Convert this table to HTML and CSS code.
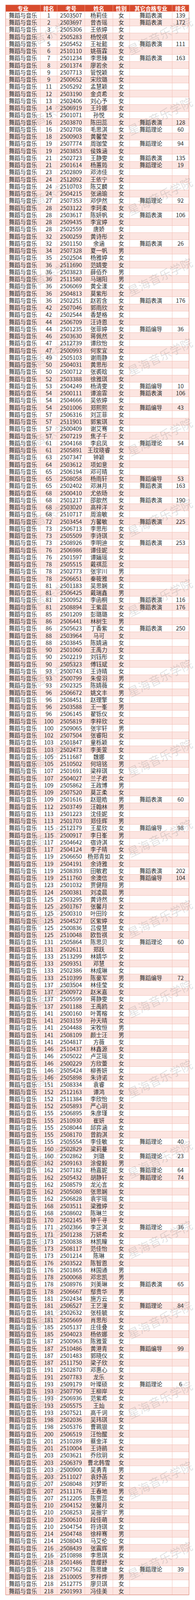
FILE: index.html
```html
<!DOCTYPE html>
<html lang="zh-CN">
<head>
<meta charset="utf-8">
<title>舞蹈与音乐 排名</title>
<link rel="stylesheet" href="styles.css">
</head>
<body>
<div class="page">
<div class="sheet">
<div class="r hd"><span>专业</span><span>排名</span><span>考号</span><span>姓名</span><span>性别</span><span>其它合格专业</span><span>排名</span></div>
<div class="r"><span>舞蹈与音乐</span><span>1</span><span>2503507</span><span>杨莉佳</span><span>女</span><span>舞蹈表演</span><span>139</span></div>
<div class="r"><span>舞蹈与音乐</span><span>2</span><span>2503697</span><span>曾杏瑶</span><span>女</span><span>舞蹈表演</span><span>172</span></div>
<div class="r"><span>舞蹈与音乐</span><span>3</span><span>2505306</span><span>王依婷</span><span>女</span><span></span><span></span></div>
<div class="r"><span>舞蹈与音乐</span><span>4</span><span>2505283</span><span>杨悦祺</span><span>女</span><span></span><span></span></div>
<div class="r"><span>舞蹈与音乐</span><span>5</span><span>2505452</span><span>王祉懿</span><span>女</span><span>舞蹈表演</span><span>111</span></div>
<div class="r"><span>舞蹈与音乐</span><span>6</span><span>2510110</span><span>姚蓓霖</span><span>女</span><span></span><span></span></div>
<div class="r"><span>舞蹈与音乐</span><span>7</span><span>2501234</span><span>李思臻</span><span>女</span><span>舞蹈表演</span><span>163</span></div>
<div class="r"><span>舞蹈与音乐</span><span>8</span><span>2501374</span><span>廖若余</span><span>女</span><span></span><span></span></div>
<div class="r"><span>舞蹈与音乐</span><span>9</span><span>2507713</span><span>管悦颖</span><span>女</span><span></span><span></span></div>
<div class="r"><span>舞蹈与音乐</span><span>9</span><span>2500652</span><span>宋欣璐</span><span>女</span><span></span><span></span></div>
<div class="r"><span>舞蹈与音乐</span><span>11</span><span>2505292</span><span>孟慧颖</span><span>女</span><span></span><span></span></div>
<div class="r"><span>舞蹈与音乐</span><span>12</span><span>2503190</span><span>金贞希</span><span>女</span><span></span><span></span></div>
<div class="r"><span>舞蹈与音乐</span><span>13</span><span>2502406</span><span>刘心予</span><span>女</span><span></span><span></span></div>
<div class="r"><span>舞蹈与音乐</span><span>14</span><span>2506919</span><span>王玲娜</span><span>女</span><span></span><span></span></div>
<div class="r"><span>舞蹈与音乐</span><span>15</span><span>2501071</span><span>孙悦</span><span>女</span><span></span><span></span></div>
<div class="r"><span>舞蹈与音乐</span><span>16</span><span>2503870</span><span>陈田蕊</span><span>女</span><span>舞蹈表演</span><span>128</span></div>
<div class="r"><span>舞蹈与音乐</span><span>16</span><span>2502708</span><span>毛思淇</span><span>女</span><span>舞蹈理论</span><span>60</span></div>
<div class="r"><span>舞蹈与音乐</span><span>18</span><span>2500903</span><span>黄馨莹</span><span>女</span><span></span><span></span></div>
<div class="r"><span>舞蹈与音乐</span><span>19</span><span>2507774</span><span>周珈莹</span><span>女</span><span>舞蹈理论</span><span>94</span></div>
<div class="r"><span>舞蹈与音乐</span><span>19</span><span>2503853</span><span>侯姝涵</span><span>女</span><span></span><span></span></div>
<div class="r"><span>舞蹈与音乐</span><span>21</span><span>2502723</span><span>王静雯</span><span>女</span><span>舞蹈表演</span><span>135</span></div>
<div class="r"><span>舞蹈与音乐</span><span>21</span><span>2501614</span><span>杨蕙筠</span><span>女</span><span>舞蹈理论</span><span>19</span></div>
<div class="r"><span>舞蹈与音乐</span><span>23</span><span>2502809</span><span>邓沛佳</span><span>女</span><span></span><span></span></div>
<div class="r"><span>舞蹈与音乐</span><span>24</span><span>2512092</span><span>王依宁</span><span>女</span><span></span><span></span></div>
<div class="r"><span>舞蹈与音乐</span><span>24</span><span>2510703</span><span>陈艾麟</span><span>女</span><span></span><span></span></div>
<div class="r"><span>舞蹈与音乐</span><span>24</span><span>2504215</span><span>张涵瑜</span><span>女</span><span></span><span></span></div>
<div class="r"><span>舞蹈与音乐</span><span>27</span><span>2507353</span><span>邓伊然</span><span>女</span><span>舞蹈理论</span><span>92</span></div>
<div class="r"><span>舞蹈与音乐</span><span>28</span><span>2503122</span><span>李珂柔</span><span>女</span><span></span><span></span></div>
<div class="r"><span>舞蹈与音乐</span><span>28</span><span>2503617</span><span>陈妍帆</span><span>女</span><span>舞蹈表演</span><span>106</span></div>
<div class="r"><span>舞蹈与音乐</span><span>28</span><span>2509435</span><span>李宜婷</span><span>女</span><span></span><span></span></div>
<div class="r"><span>舞蹈与音乐</span><span>28</span><span>2502559</span><span>唐娇</span><span>女</span><span></span><span></span></div>
<div class="r"><span>舞蹈与音乐</span><span>32</span><span>2500259</span><span>黄诗彤</span><span>女</span><span></span><span></span></div>
<div class="r"><span>舞蹈与音乐</span><span>32</span><span>2501150</span><span>余涵</span><span>女</span><span>舞蹈表演</span><span>26</span></div>
<div class="r"><span>舞蹈与音乐</span><span>34</span><span>2507328</span><span>夏一帆</span><span>男</span><span></span><span></span></div>
<div class="r"><span>舞蹈与音乐</span><span>35</span><span>2502504</span><span>杨雅婷</span><span>女</span><span></span><span></span></div>
<div class="r"><span>舞蹈与音乐</span><span>36</span><span>2511690</span><span>范婧雯</span><span>女</span><span></span><span></span></div>
<div class="r"><span>舞蹈与音乐</span><span>36</span><span>2503823</span><span>薛佰乔</span><span>男</span><span></span><span></span></div>
<div class="r"><span>舞蹈与音乐</span><span>36</span><span>2511580</span><span>马瑞阳</span><span>男</span><span></span><span></span></div>
<div class="r"><span>舞蹈与音乐</span><span>36</span><span>2506069</span><span>黄全漾</span><span>女</span><span></span><span></span></div>
<div class="r"><span>舞蹈与音乐</span><span>36</span><span>2504813</span><span>莫紫彤</span><span>女</span><span></span><span></span></div>
<div class="r"><span>舞蹈与音乐</span><span>36</span><span>2502251</span><span>赵若含</span><span>女</span><span>舞蹈表演</span><span>176</span></div>
<div class="r"><span>舞蹈与音乐</span><span>42</span><span>2507046</span><span>郭雨欣</span><span>女</span><span></span><span></span></div>
<div class="r"><span>舞蹈与音乐</span><span>42</span><span>2502544</span><span>香楚格</span><span>女</span><span></span><span></span></div>
<div class="r"><span>舞蹈与音乐</span><span>44</span><span>2506709</span><span>汪诗恩</span><span>女</span><span></span><span></span></div>
<div class="r"><span>舞蹈与音乐</span><span>44</span><span>2501235</span><span>张菲婷</span><span>女</span><span>舞蹈编导</span><span>36</span></div>
<div class="r"><span>舞蹈与音乐</span><span>46</span><span>2503630</span><span>蒋佩然</span><span>女</span><span></span><span></span></div>
<div class="r"><span>舞蹈与音乐</span><span>47</span><span>2512739</span><span>谭欣怡</span><span>女</span><span></span><span></span></div>
<div class="r"><span>舞蹈与音乐</span><span>47</span><span>2500993</span><span>何家宜</span><span>女</span><span></span><span></span></div>
<div class="r"><span>舞蹈与音乐</span><span>49</span><span>2505103</span><span>谢雨静</span><span>女</span><span></span><span></span></div>
<div class="r"><span>舞蹈与音乐</span><span>50</span><span>2504031</span><span>黄思彤</span><span>女</span><span></span><span></span></div>
<div class="r"><span>舞蹈与音乐</span><span>50</span><span>2500712</span><span>张裘晗</span><span>女</span><span></span><span></span></div>
<div class="r"><span>舞蹈与音乐</span><span>52</span><span>2503388</span><span>徐雅琪</span><span>女</span><span></span><span></span></div>
<div class="r"><span>舞蹈与音乐</span><span>53</span><span>2504249</span><span>杨清雯</span><span>女</span><span>舞蹈编导</span><span>10</span></div>
<div class="r"><span>舞蹈与音乐</span><span>54</span><span>2500111</span><span>谭渝霏</span><span>女</span><span>舞蹈表演</span><span>106</span></div>
<div class="r"><span>舞蹈与音乐</span><span>54</span><span>2504666</span><span>吴依婷</span><span>女</span><span></span><span></span></div>
<div class="r"><span>舞蹈与音乐</span><span>54</span><span>2501006</span><span>郑熙熙</span><span>女</span><span>舞蹈编导</span><span>43</span></div>
<div class="r"><span>舞蹈与音乐</span><span>57</span><span>2506316</span><span>刘芷菲</span><span>女</span><span></span><span></span></div>
<div class="r"><span>舞蹈与音乐</span><span>57</span><span>2511901</span><span>郭紫琪</span><span>女</span><span></span><span></span></div>
<div class="r"><span>舞蹈与音乐</span><span>57</span><span>2500409</span><span>谢艾骞</span><span>女</span><span></span><span></span></div>
<div class="r"><span>舞蹈与音乐</span><span>57</span><span>2507219</span><span>焦子千</span><span>女</span><span></span><span></span></div>
<div class="r"><span>舞蹈与音乐</span><span>61</span><span>2504168</span><span>李启凤</span><span>女</span><span>舞蹈理论</span><span>54</span></div>
<div class="r"><span>舞蹈与音乐</span><span>61</span><span>2505891</span><span>王玟晓睿</span><span>女</span><span></span><span></span></div>
<div class="r"><span>舞蹈与音乐</span><span>63</span><span>2507347</span><span>钟颖</span><span>女</span><span></span><span></span></div>
<div class="r"><span>舞蹈与音乐</span><span>64</span><span>2503612</span><span>项如意</span><span>女</span><span></span><span></span></div>
<div class="r"><span>舞蹈与音乐</span><span>65</span><span>2506194</span><span>邓可晴</span><span>女</span><span></span><span></span></div>
<div class="r"><span>舞蹈与音乐</span><span>65</span><span>2508058</span><span>杨雨轩</span><span>女</span><span>舞蹈编导</span><span>53</span></div>
<div class="r"><span>舞蹈与音乐</span><span>65</span><span>2502402</span><span>邓淋月</span><span>女</span><span>舞蹈表演</span><span>163</span></div>
<div class="r"><span>舞蹈与音乐</span><span>68</span><span>2500410</span><span>尤依旸</span><span>女</span><span></span><span></span></div>
<div class="r"><span>舞蹈与音乐</span><span>68</span><span>2501217</span><span>邵歆然</span><span>女</span><span>舞蹈表演</span><span>190</span></div>
<div class="r"><span>舞蹈与音乐</span><span>68</span><span>2503020</span><span>高梓洋</span><span>女</span><span></span><span></span></div>
<div class="r"><span>舞蹈与音乐</span><span>68</span><span>2510717</span><span>周渝敏</span><span>女</span><span></span><span></span></div>
<div class="r"><span>舞蹈与音乐</span><span>72</span><span>2503454</span><span>方馨敏</span><span>女</span><span>舞蹈表演</span><span>225</span></div>
<div class="r"><span>舞蹈与音乐</span><span>73</span><span>2506713</span><span>李思彤</span><span>女</span><span></span><span></span></div>
<div class="r"><span>舞蹈与音乐</span><span>73</span><span>2505509</span><span>李诗琪</span><span>女</span><span></span><span></span></div>
<div class="r"><span>舞蹈与音乐</span><span>73</span><span>2508926</span><span>李明迪</span><span>女</span><span>舞蹈表演</span><span>253</span></div>
<div class="r"><span>舞蹈与音乐</span><span>76</span><span>2506986</span><span>谭佳妮</span><span>女</span><span></span><span></span></div>
<div class="r"><span>舞蹈与音乐</span><span>76</span><span>2501597</span><span>谭婳瑶</span><span>女</span><span></span><span></span></div>
<div class="r"><span>舞蹈与音乐</span><span>78</span><span>2505515</span><span>戴祺蕊</span><span>女</span><span></span><span></span></div>
<div class="r"><span>舞蹈与音乐</span><span>78</span><span>2502773</span><span>张宇川</span><span>男</span><span></span><span></span></div>
<div class="r"><span>舞蹈与音乐</span><span>78</span><span>2506651</span><span>秦筱雅</span><span>女</span><span></span><span></span></div>
<div class="r"><span>舞蹈与音乐</span><span>81</span><span>2501183</span><span>吴思娴</span><span>女</span><span></span><span></span></div>
<div class="r"><span>舞蹈与音乐</span><span>81</span><span>2506425</span><span>戴瑞鑫</span><span>男</span><span></span><span></span></div>
<div class="r"><span>舞蹈与音乐</span><span>81</span><span>2500952</span><span>李函桐</span><span>女</span><span>舞蹈表演</span><span>116</span></div>
<div class="r"><span>舞蹈与音乐</span><span>81</span><span>2508894</span><span>王紫晨</span><span>女</span><span>舞蹈表演</span><span>176</span></div>
<div class="r"><span>舞蹈与音乐</span><span>85</span><span>2501209</span><span>彭璐璐</span><span>女</span><span></span><span></span></div>
<div class="r"><span>舞蹈与音乐</span><span>86</span><span>2506441</span><span>林树生</span><span>男</span><span></span><span></span></div>
<div class="r"><span>舞蹈与音乐</span><span>86</span><span>2505623</span><span>丁香紫</span><span>女</span><span>舞蹈表演</span><span>250</span></div>
<div class="r"><span>舞蹈与音乐</span><span>88</span><span>2503964</span><span>马可</span><span>女</span><span></span><span></span></div>
<div class="r"><span>舞蹈与音乐</span><span>88</span><span>2503845</span><span>陈婧涵</span><span>女</span><span></span><span></span></div>
<div class="r"><span>舞蹈与音乐</span><span>90</span><span>2501060</span><span>王禹力</span><span>女</span><span></span><span></span></div>
<div class="r"><span>舞蹈与音乐</span><span>90</span><span>2502219</span><span>刘钰彤</span><span>女</span><span></span><span></span></div>
<div class="r"><span>舞蹈与音乐</span><span>90</span><span>2505323</span><span>傅钰斌</span><span>女</span><span></span><span></span></div>
<div class="r"><span>舞蹈与音乐</span><span>93</span><span>2500743</span><span>王诗晴</span><span>女</span><span></span><span></span></div>
<div class="r"><span>舞蹈与音乐</span><span>93</span><span>2500799</span><span>朱俊羽</span><span>男</span><span></span><span></span></div>
<div class="r"><span>舞蹈与音乐</span><span>93</span><span>2502325</span><span>陈婧薇</span><span>女</span><span></span><span></span></div>
<div class="r"><span>舞蹈与音乐</span><span>96</span><span>2506672</span><span>姚文丰</span><span>男</span><span></span><span></span></div>
<div class="r"><span>舞蹈与音乐</span><span>96</span><span>2508451</span><span>赵理擎</span><span>女</span><span></span><span></span></div>
<div class="r"><span>舞蹈与音乐</span><span>96</span><span>2503588</span><span>王一峯</span><span>男</span><span></span><span></span></div>
<div class="r"><span>舞蹈与音乐</span><span>96</span><span>2506145</span><span>翟铄仪</span><span>女</span><span></span><span></span></div>
<div class="r"><span>舞蹈与音乐</span><span>100</span><span>2505819</span><span>李梓欣</span><span>女</span><span></span><span></span></div>
<div class="r"><span>舞蹈与音乐</span><span>100</span><span>2509065</span><span>张宇轩</span><span>男</span><span></span><span></span></div>
<div class="r"><span>舞蹈与音乐</span><span>102</span><span>2507504</span><span>张睿阳</span><span>女</span><span></span><span></span></div>
<div class="r"><span>舞蹈与音乐</span><span>103</span><span>2501847</span><span>童栎颖</span><span>女</span><span></span><span></span></div>
<div class="r"><span>舞蹈与音乐</span><span>103</span><span>2502473</span><span>李美萱</span><span>女</span><span></span><span></span></div>
<div class="r"><span>舞蹈与音乐</span><span>105</span><span>2511687</span><span>魏娜</span><span>女</span><span></span><span></span></div>
<div class="r"><span>舞蹈与音乐</span><span>105</span><span>2510502</span><span>何培铭</span><span>男</span><span></span><span></span></div>
<div class="r"><span>舞蹈与音乐</span><span>107</span><span>2501691</span><span>梁梓琪</span><span>女</span><span></span><span></span></div>
<div class="r"><span>舞蹈与音乐</span><span>107</span><span>2504027</span><span>兰子君</span><span>女</span><span></span><span></span></div>
<div class="r"><span>舞蹈与音乐</span><span>109</span><span>2505862</span><span>王政博</span><span>男</span><span></span><span></span></div>
<div class="r"><span>舞蹈与音乐</span><span>109</span><span>2507520</span><span>莫芷柔</span><span>女</span><span></span><span></span></div>
<div class="r"><span>舞蹈与音乐</span><span>109</span><span>2501616</span><span>赵琨皓</span><span>男</span><span>舞蹈表演</span><span>60</span></div>
<div class="r"><span>舞蹈与音乐</span><span>112</span><span>2503749</span><span>汪翰林</span><span>男</span><span></span><span></span></div>
<div class="r"><span>舞蹈与音乐</span><span>113</span><span>2501223</span><span>沈佳妮</span><span>女</span><span></span><span></span></div>
<div class="r"><span>舞蹈与音乐</span><span>113</span><span>2501703</span><span>郑佳辉</span><span>男</span><span></span><span></span></div>
<div class="r"><span>舞蹈与音乐</span><span>115</span><span>2512179</span><span>王星欣</span><span>女</span><span>舞蹈编导</span><span>98</span></div>
<div class="r"><span>舞蹈与音乐</span><span>115</span><span>2500917</span><span>李日峯</span><span>男</span><span></span><span></span></div>
<div class="r"><span>舞蹈与音乐</span><span>117</span><span>2504642</span><span>宿诗淇</span><span>女</span><span></span><span></span></div>
<div class="r"><span>舞蹈与音乐</span><span>117</span><span>2504124</span><span>李子晴</span><span>女</span><span></span><span></span></div>
<div class="r"><span>舞蹈与音乐</span><span>119</span><span>2506650</span><span>杨郑青如</span><span>女</span><span></span><span></span></div>
<div class="r"><span>舞蹈与音乐</span><span>119</span><span>2504191</span><span>余诗雅</span><span>女</span><span></span><span></span></div>
<div class="r"><span>舞蹈与音乐</span><span>119</span><span>2508393</span><span>田敏君</span><span>女</span><span>舞蹈表演</span><span>202</span></div>
<div class="r"><span>舞蹈与音乐</span><span>119</span><span>2511760</span><span>余澳信</span><span>女</span><span>舞蹈编导</span><span>104</span></div>
<div class="r"><span>舞蹈与音乐</span><span>123</span><span>2501032</span><span>贾健翔</span><span>男</span><span></span><span></span></div>
<div class="r"><span>舞蹈与音乐</span><span>124</span><span>2500381</span><span>刘凌晨</span><span>男</span><span></span><span></span></div>
<div class="r"><span>舞蹈与音乐</span><span>125</span><span>2503295</span><span>黄诗然</span><span>女</span><span></span><span></span></div>
<div class="r"><span>舞蹈与音乐</span><span>125</span><span>2501767</span><span>张馨月</span><span>女</span><span></span><span></span></div>
<div class="r"><span>舞蹈与音乐</span><span>125</span><span>2500310</span><span>叶田玲</span><span>女</span><span></span><span></span></div>
<div class="r"><span>舞蹈与音乐</span><span>125</span><span>2504527</span><span>区紫婷</span><span>女</span><span></span><span></span></div>
<div class="r"><span>舞蹈与音乐</span><span>125</span><span>2500836</span><span>吕俊慧</span><span>女</span><span></span><span></span></div>
<div class="r"><span>舞蹈与音乐</span><span>125</span><span>2510048</span><span>欧哲祺</span><span>女</span><span></span><span></span></div>
<div class="r"><span>舞蹈与音乐</span><span>131</span><span>2505864</span><span>陈思贝</span><span>女</span><span>舞蹈理论</span><span>60</span></div>
<div class="r"><span>舞蹈与音乐</span><span>131</span><span>2502611</span><span>郑跃</span><span>女</span><span></span><span></span></div>
<div class="r"><span>舞蹈与音乐</span><span>133</span><span>2513299</span><span>林婧华</span><span>女</span><span></span><span></span></div>
<div class="r"><span>舞蹈与音乐</span><span>133</span><span>2509351</span><span>邓慧</span><span>女</span><span></span><span></span></div>
<div class="r"><span>舞蹈与音乐</span><span>133</span><span>2502386</span><span>林成琳</span><span>女</span><span></span><span></span></div>
<div class="r"><span>舞蹈与音乐</span><span>133</span><span>2510399</span><span>陈豪军</span><span>男</span><span>舞蹈编导</span><span>72</span></div>
<div class="r"><span>舞蹈与音乐</span><span>137</span><span>2503504</span><span>林佳莹</span><span>女</span><span></span><span></span></div>
<div class="r"><span>舞蹈与音乐</span><span>137</span><span>2500972</span><span>赵米嘉</span><span>女</span><span></span><span></span></div>
<div class="r"><span>舞蹈与音乐</span><span>137</span><span>2505599</span><span>蒋静雯</span><span>女</span><span></span><span></span></div>
<div class="r"><span>舞蹈与音乐</span><span>137</span><span>2501188</span><span>王禹鸥</span><span>女</span><span></span><span></span></div>
<div class="r"><span>舞蹈与音乐</span><span>141</span><span>2500160</span><span>叶菁榕</span><span>女</span><span></span><span></span></div>
<div class="r"><span>舞蹈与音乐</span><span>141</span><span>2503159</span><span>孙天晴</span><span>女</span><span></span><span></span></div>
<div class="r"><span>舞蹈与音乐</span><span>141</span><span>2504488</span><span>宋牧恒</span><span>男</span><span></span><span></span></div>
<div class="r"><span>舞蹈与音乐</span><span>141</span><span>2508109</span><span>颜士汪</span><span>男</span><span></span><span></span></div>
<div class="r"><span>舞蹈与音乐</span><span>141</span><span>2504817</span><span>方薇</span><span>女</span><span></span><span></span></div>
<div class="r"><span>舞蹈与音乐</span><span>146</span><span>2510437</span><span>林鑫源</span><span>女</span><span></span><span></span></div>
<div class="r"><span>舞蹈与音乐</span><span>146</span><span>2505022</span><span>卢芷瑶</span><span>女</span><span></span><span></span></div>
<div class="r"><span>舞蹈与音乐</span><span>146</span><span>2500229</span><span>方欣蕾</span><span>女</span><span></span><span></span></div>
<div class="r"><span>舞蹈与音乐</span><span>146</span><span>2505424</span><span>柳善妍</span><span>女</span><span></span><span></span></div>
<div class="r"><span>舞蹈与音乐</span><span>146</span><span>2505898</span><span>朱诗诺</span><span>女</span><span></span><span></span></div>
<div class="r"><span>舞蹈与音乐</span><span>151</span><span>2508334</span><span>袁睿</span><span>女</span><span></span><span></span></div>
<div class="r"><span>舞蹈与音乐</span><span>152</span><span>2512163</span><span>谭鸿</span><span>女</span><span></span><span></span></div>
<div class="r"><span>舞蹈与音乐</span><span>152</span><span>2511384</span><span>李欣怡</span><span>女</span><span></span><span></span></div>
<div class="r"><span>舞蹈与音乐</span><span>152</span><span>2505893</span><span>严心玥</span><span>女</span><span></span><span></span></div>
<div class="r"><span>舞蹈与音乐</span><span>155</span><span>2506895</span><span>朱彦瑾</span><span>女</span><span></span><span></span></div>
<div class="r"><span>舞蹈与音乐</span><span>155</span><span>2510930</span><span>崔妍</span><span>女</span><span></span><span></span></div>
<div class="r"><span>舞蹈与音乐</span><span>155</span><span>2508044</span><span>邱弈涵</span><span>女</span><span></span><span></span></div>
<div class="r"><span>舞蹈与音乐</span><span>155</span><span>2508170</span><span>曾韵淇</span><span>女</span><span></span><span></span></div>
<div class="r"><span>舞蹈与音乐</span><span>155</span><span>2505554</span><span>李佳敏</span><span>女</span><span>舞蹈理论</span><span>40</span></div>
<div class="r"><span>舞蹈与音乐</span><span>160</span><span>2502829</span><span>梁莉蔓</span><span>女</span><span></span><span></span></div>
<div class="r"><span>舞蹈与音乐</span><span>160</span><span>2502862</span><span>刘璐</span><span>女</span><span>舞蹈理论</span><span>23</span></div>
<div class="r"><span>舞蹈与音乐</span><span>162</span><span>2509163</span><span>涂俊毅</span><span>男</span><span></span><span></span></div>
<div class="r"><span>舞蹈与音乐</span><span>162</span><span>2507182</span><span>杨嘉妮</span><span>女</span><span>舞蹈理论</span><span>64</span></div>
<div class="r"><span>舞蹈与音乐</span><span>162</span><span>2505432</span><span>胡静轩</span><span>女</span><span>舞蹈理论</span><span>74</span></div>
<div class="r"><span>舞蹈与音乐</span><span>162</span><span>2508579</span><span>龙沁言</span><span>女</span><span></span><span></span></div>
<div class="r"><span>舞蹈与音乐</span><span>162</span><span>2505080</span><span>张思娴</span><span>女</span><span></span><span></span></div>
<div class="r"><span>舞蹈与音乐</span><span>162</span><span>2506828</span><span>袁宇瑶</span><span>女</span><span></span><span></span></div>
<div class="r"><span>舞蹈与音乐</span><span>168</span><span>2503511</span><span>梁雅婷</span><span>女</span><span></span><span></span></div>
<div class="r"><span>舞蹈与音乐</span><span>168</span><span>2508602</span><span>陈琳兰</span><span>女</span><span></span><span></span></div>
<div class="r"><span>舞蹈与音乐</span><span>170</span><span>2502145</span><span>钟千寻</span><span>女</span><span></span><span></span></div>
<div class="r"><span>舞蹈与音乐</span><span>171</span><span>2502366</span><span>李芷淇</span><span>女</span><span>舞蹈理论</span><span>36</span></div>
<div class="r"><span>舞蹈与音乐</span><span>171</span><span>2501238</span><span>万妍希</span><span>女</span><span></span><span></span></div>
<div class="r"><span>舞蹈与音乐</span><span>173</span><span>2500838</span><span>林凯瞳</span><span>女</span><span></span><span></span></div>
<div class="r"><span>舞蹈与音乐</span><span>173</span><span>2508117</span><span>范佳怡</span><span>女</span><span></span><span></span></div>
<div class="r"><span>舞蹈与音乐</span><span>173</span><span>2501214</span><span>陈琳</span><span>女</span><span></span><span></span></div>
<div class="r"><span>舞蹈与音乐</span><span>176</span><span>2503522</span><span>陈智恩</span><span>女</span><span></span><span></span></div>
<div class="r"><span>舞蹈与音乐</span><span>176</span><span>2501865</span><span>林国通</span><span>男</span><span></span><span></span></div>
<div class="r"><span>舞蹈与音乐</span><span>178</span><span>2500068</span><span>邓忠凯</span><span>男</span><span></span><span></span></div>
<div class="r"><span>舞蹈与音乐</span><span>178</span><span>2508976</span><span>刘美琳</span><span>女</span><span>舞蹈表演</span><span>65</span></div>
<div class="r"><span>舞蹈与音乐</span><span>178</span><span>2506667</span><span>鄢贵华</span><span>男</span><span></span><span></span></div>
<div class="r"><span>舞蹈与音乐</span><span>181</span><span>2502434</span><span>施方云</span><span>女</span><span></span><span></span></div>
<div class="r"><span>舞蹈与音乐</span><span>181</span><span>2506527</span><span>王艺潼</span><span>女</span><span>舞蹈理论</span><span>84</span></div>
<div class="r"><span>舞蹈与音乐</span><span>181</span><span>2502632</span><span>张桂毓</span><span>女</span><span></span><span></span></div>
<div class="r"><span>舞蹈与音乐</span><span>181</span><span>2505669</span><span>肖思彤</span><span>女</span><span></span><span></span></div>
<div class="r"><span>舞蹈与音乐</span><span>185</span><span>2505137</span><span>庄佳叠</span><span>女</span><span></span><span></span></div>
<div class="r"><span>舞蹈与音乐</span><span>185</span><span>2504023</span><span>杨依娜</span><span>女</span><span></span><span></span></div>
<div class="r"><span>舞蹈与音乐</span><span>187</span><span>2500963</span><span>陈雅萱</span><span>女</span><span></span><span></span></div>
<div class="r"><span>舞蹈与音乐</span><span>187</span><span>2510486</span><span>黄港青</span><span>女</span><span>舞蹈编导</span><span>99</span></div>
<div class="r"><span>舞蹈与音乐</span><span>187</span><span>2501483</span><span>郭晓仪</span><span>女</span><span></span><span></span></div>
<div class="r"><span>舞蹈与音乐</span><span>187</span><span>2511750</span><span>梁子欣</span><span>女</span><span></span><span></span></div>
<div class="r"><span>舞蹈与音乐</span><span>191</span><span>2502870</span><span>邓惠心</span><span>女</span><span></span><span></span></div>
<div class="r"><span>舞蹈与音乐</span><span>191</span><span>2507783</span><span>龙乐</span><span>女</span><span></span><span></span></div>
<div class="r"><span>舞蹈与音乐</span><span>193</span><span>2509179</span><span>叶璨硕</span><span>女</span><span>舞蹈理论</span><span>6</span></div>
<div class="r"><span>舞蹈与音乐</span><span>193</span><span>2507790</span><span>王柳岸</span><span>女</span><span></span><span></span></div>
<div class="r"><span>舞蹈与音乐</span><span>193</span><span>2506936</span><span>范紫希</span><span>女</span><span></span><span></span></div>
<div class="r"><span>舞蹈与音乐</span><span>193</span><span>2505575</span><span>王灿</span><span>女</span><span></span><span></span></div>
<div class="r"><span>舞蹈与音乐</span><span>193</span><span>2507521</span><span>高千词</span><span>女</span><span></span><span></span></div>
<div class="r"><span>舞蹈与音乐</span><span>198</span><span>2502036</span><span>吴玮琪</span><span>女</span><span></span><span></span></div>
<div class="r"><span>舞蹈与音乐</span><span>198</span><span>2505376</span><span>曹珮银</span><span>女</span><span></span><span></span></div>
<div class="r"><span>舞蹈与音乐</span><span>200</span><span>2506519</span><span>汪怡醒</span><span>女</span><span></span><span></span></div>
<div class="r"><span>舞蹈与音乐</span><span>201</span><span>2510289</span><span>蔡金洋</span><span>女</span><span></span><span></span></div>
<div class="r"><span>舞蹈与音乐</span><span>201</span><span>2510004</span><span>王诗鹃</span><span>女</span><span></span><span></span></div>
<div class="r"><span>舞蹈与音乐</span><span>203</span><span>2503621</span><span>乔欣玥</span><span>女</span><span></span><span></span></div>
<div class="r"><span>舞蹈与音乐</span><span>203</span><span>2506379</span><span>曹北韩雪</span><span>女</span><span></span><span></span></div>
<div class="r"><span>舞蹈与音乐</span><span>203</span><span>2500900</span><span>吴勇青</span><span>男</span><span></span><span></span></div>
<div class="r"><span>舞蹈与音乐</span><span>203</span><span>2511027</span><span>袁妤菡</span><span>女</span><span></span><span></span></div>
<div class="r"><span>舞蹈与音乐</span><span>207</span><span>2508048</span><span>刘梦昕</span><span>女</span><span></span><span></span></div>
<div class="r"><span>舞蹈与音乐</span><span>207</span><span>2511176</span><span>王春地</span><span>男</span><span></span><span></span></div>
<div class="r"><span>舞蹈与音乐</span><span>207</span><span>2512205</span><span>陈贾蕊</span><span>女</span><span></span><span></span></div>
<div class="r"><span>舞蹈与音乐</span><span>210</span><span>2504152</span><span>张馨月</span><span>女</span><span></span><span></span></div>
<div class="r"><span>舞蹈与音乐</span><span>210</span><span>2508253</span><span>吴振宇</span><span>男</span><span></span><span></span></div>
<div class="r"><span>舞蹈与音乐</span><span>210</span><span>2500610</span><span>段佳萌</span><span>女</span><span></span><span></span></div>
<div class="r"><span>舞蹈与音乐</span><span>210</span><span>2504754</span><span>符诗琪</span><span>女</span><span></span><span></span></div>
<div class="r"><span>舞蹈与音乐</span><span>214</span><span>2504748</span><span>徐梓骞</span><span>男</span><span></span><span></span></div>
<div class="r"><span>舞蹈与音乐</span><span>214</span><span>2508043</span><span>马艾伦</span><span>女</span><span></span><span></span></div>
<div class="r"><span>舞蹈与音乐</span><span>216</span><span>2508439</span><span>张震辉</span><span>男</span><span></span><span></span></div>
<div class="r"><span>舞蹈与音乐</span><span>216</span><span>2510898</span><span>李思琪</span><span>女</span><span></span><span></span></div>
<div class="r"><span>舞蹈与音乐</span><span>218</span><span>2501486</span><span>曾缨舒</span><span>女</span><span></span><span></span></div>
<div class="r"><span>舞蹈与音乐</span><span>218</span><span>2507562</span><span>陈思婕</span><span>女</span><span>舞蹈理论</span><span>39</span></div>
<div class="r"><span>舞蹈与音乐</span><span>218</span><span>2510005</span><span>罗梓烨</span><span>男</span><span></span><span></span></div>
<div class="r"><span>舞蹈与音乐</span><span>218</span><span>2512775</span><span>廖贝琪</span><span>女</span><span></span><span></span></div>
<div class="r"><span>舞蹈与音乐</span><span>218</span><span>2501993</span><span>冯佳美</span><span>女</span><span></span><span></span></div>
</div>
</div>
<div class="wm-layer" aria-hidden="true">
<div class="wm-row"><span class="wm">星海音乐学院</span><span class="wm">星海音乐学院</span></div>
<div class="wm-row"><span class="wm">星海音乐学院</span><span class="wm">星海音乐学院</span></div>
<div class="wm-row"><span class="wm">星海音乐学院</span><span class="wm">星海音乐学院</span></div>
<div class="wm-row"><span class="wm">星海音乐学院</span><span class="wm">星海音乐学院</span></div>
<div class="wm-row"><span class="wm">星海音乐学院</span><span class="wm">星海音乐学院</span></div>
<div class="wm-row"><span class="wm">星海音乐学院</span><span class="wm">星海音乐学院</span></div>
<div class="wm-row"><span class="wm">星海音乐学院</span><span class="wm">星海音乐学院</span></div>
<div class="wm-row"><span class="wm">星海音乐学院</span><span class="wm">星海音乐学院</span></div>
<div class="wm-row"><span class="wm">星海音乐学院</span><span class="wm">星海音乐学院</span></div>
<div class="wm-row"><span class="wm">星海音乐学院</span><span class="wm">星海音乐学院</span></div>
<div class="wm-row"><span class="wm">星海音乐学院</span><span class="wm">星海音乐学院</span></div>
<div class="wm-row"><span class="wm">星海音乐学院</span><span class="wm">星海音乐学院</span></div>
<div class="wm-row"><span class="wm">星海音乐学院</span><span class="wm">星海音乐学院</span></div>
<div class="wm-row"><span class="wm">星海音乐学院</span><span class="wm">星海音乐学院</span></div>
<div class="wm-row"><span class="wm">星海音乐学院</span><span class="wm">星海音乐学院</span></div>
<div class="wm-row"><span class="wm">星海音乐学院</span><span class="wm">星海音乐学院</span></div>
<div class="wm-row"><span class="wm">星海音乐学院</span><span class="wm">星海音乐学院</span></div>
<div class="wm-row"><span class="wm">星海音乐学院</span><span class="wm">星海音乐学院</span></div>
<div class="wm-row"><span class="wm">星海音乐学院</span><span class="wm">星海音乐学院</span></div>
<div class="wm-row"><span class="wm">星海音乐学院</span><span class="wm">星海音乐学院</span></div>
<div class="wm-row"><span class="wm">星海音乐学院</span><span class="wm">星海音乐学院</span></div>
</div>
</body>
</html>
```

FILE: styles.css
```css
* {
  box-sizing: border-box;
}

html, body {
  margin: 0;
  padding: 0;
  background: #ffffff;
}

body {
  position: relative;
  font-family: "Noto Sans CJK SC", "Microsoft YaHei", "Noto Sans", sans-serif;
  color: #2b2b2b;
}

/* The browser window is 4096px tall, so the sheet is laid out at 0.87 of the
   reference's vertical metrics to show every row inside the frame. */
.page {
  padding: 12px 15px 12px 14px;
}

.sheet {
  width: 471px;
  border: 1px solid #e38a7a;
  box-shadow: 0 1px 2px rgba(200, 120, 110, 0.35);
}

.r {
  display: grid;
  grid-template-columns: 89px 43px 71px 72px 43px 109px 42px;
  height: 18.25px;
  border-bottom: 1px solid #f2c3ba;
  background: #ffffff;
  font-size: 14.5px;
  line-height: 1;
}

.r:nth-child(odd) {
  background: #fce5e1;
}

.r > span {
  display: flex;
  align-items: center;
  justify-content: center;
  white-space: nowrap;
  border-right: 1px solid #f2c3ba;
}

.r > span:last-child {
  border-right: none;
}

.r.hd {
  height: 17.4px;
  background: #d84b2d;
  color: #ffffff;
  font-weight: 700;
  font-size: 14px;
  border-bottom: 1px solid #e7907f;
}

.r.hd > span {
  border-right: 1px solid rgba(255, 220, 210, 0.55);
}

.r.hd > span:last-child {
  border-right: none;
}

.r:last-child {
  border-bottom: none;
}

/* watermark overlay */
.wm-layer {
  position: absolute;
  top: 0;
  left: 0;
  right: 0;
  bottom: 0;
  overflow: hidden;
  pointer-events: none;
}

.wm-row {
  height: 205.4px;
  display: flex;
  align-items: flex-end;
  padding-left: 40px;
}

.wm-row:first-child {
  margin-top: -62px;
}

.wm {
  display: block;
  font-size: 30px;
  line-height: 1;
  white-space: nowrap;
  color: rgba(120, 120, 120, 0.22);
  transform: rotate(-25.8deg);
  transform-origin: 0 100%;
}

.wm + .wm {
  margin-left: 115px;
}
```
